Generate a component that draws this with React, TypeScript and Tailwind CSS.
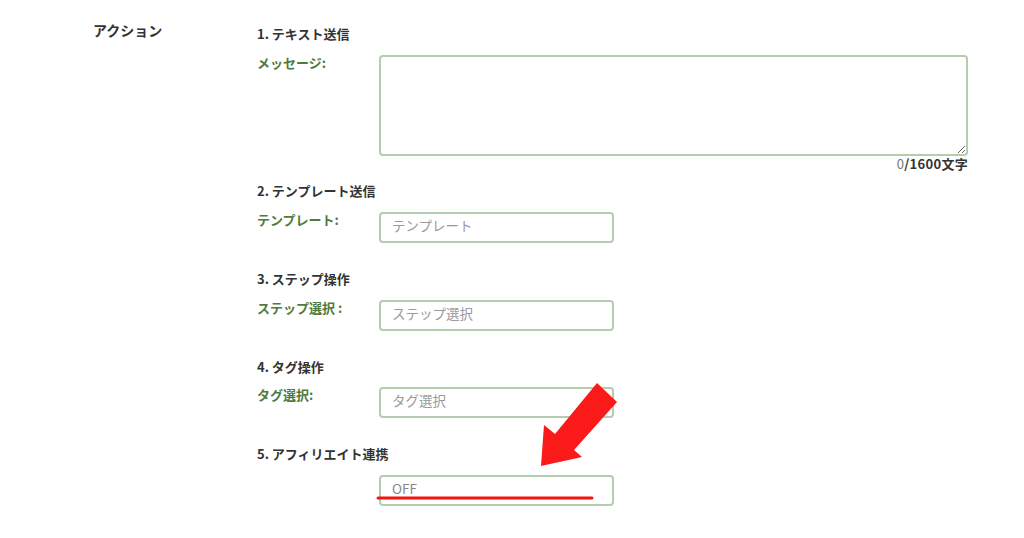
import React from "react";

const font = { fontFamily: '"Noto Sans CJK JP", "Noto Sans", sans-serif' };

function Header({ children }: { children: React.ReactNode }) {
  return (
    <div className="h-5 leading-5 text-[13px] font-bold text-[#333333]">{children}</div>
  );
}

function Label({ children }: { children?: React.ReactNode }) {
  return (
    <div className="w-[122px] shrink-0 h-4 leading-4 text-[13px] font-bold text-[#4f7b3d]">
      {children}
    </div>
  );
}

function Field({ placeholder, value }: { placeholder?: string; value?: string }) {
  return (
    <input
      readOnly
      placeholder={placeholder}
      value={value ?? ""}
      className="w-[235px] h-[31px] rounded-[4px] border-2 border-[#b3cdae] bg-white pl-[11px] pt-0 pb-[5px] text-[13.5px] text-[#888888] placeholder:text-[#9a9a9a] outline-none"
      style={font}
    />
  );
}

export default function App() {
  return (
    <div className="relative w-[1024px] h-[538px] bg-white overflow-hidden" style={font}>
      <div className="flex pt-5 pl-[93px]">
        <div className="w-[164px] shrink-0 h-5 leading-5 text-[14px] font-bold text-[#333333]">
          アクション
        </div>
        <div className="flex flex-col pt-1">
          {/* 1 */}
          <Header>1. テキスト送信</Header>
          <div className="flex mt-[11px]">
            <Label>メッセージ:</Label>
            <textarea
              readOnly
              className="w-[589px] h-[101px] rounded-[4px] border-2 border-[#b3cdae] bg-white outline-none"
            />
          </div>
          <div className="w-[711px] h-4 leading-4 text-right text-[13px] tracking-[0.3px]">
            <span className="text-[#777777]">0</span>
            <span className="font-bold text-[#333333]">/1600文字</span>
          </div>

          {/* 2 */}
          <div className="mt-[9px]">
            <Header>2. テンプレート送信</Header>
          </div>
          <div className="flex mt-[11px]">
            <Label>テンプレート:</Label>
            <Field placeholder="テンプレート" />
          </div>

          {/* 3 */}
          <div className="mt-[26px]">
            <Header>3. ステップ操作</Header>
          </div>
          <div className="flex mt-[11px]">
            <Label>ステップ選択 :</Label>
            <Field placeholder="ステップ選択" />
          </div>

          {/* 4 */}
          <div className="mt-[26px]">
            <Header>4. タグ操作</Header>
          </div>
          <div className="flex mt-[10px]">
            <Label>タグ選択:</Label>
            <Field placeholder="タグ選択" />
          </div>

          {/* 5 */}
          <div className="mt-[26px]">
            <Header>5. アフィリエイト連携</Header>
          </div>
          <div className="flex mt-[11px]">
            <Label />
            <Field value="OFF" />
          </div>
        </div>
      </div>

      {/* annotation overlay */}
      <svg
        className="absolute left-0 top-0 pointer-events-none"
        width={1024}
        height={538}
        viewBox="0 0 1024 538"
      >
        <polygon
          points="541,466 544,425 555,434 597,383 617,402 574,450 582,457"
          fill="#fb1a1a"
        />
        <line
          x1={378}
          y1={498}
          x2={592}
          y2={498}
          stroke="#f51212"
          strokeWidth={3}
          strokeLinecap="round"
        />
      </svg>
    </div>
  );
}
